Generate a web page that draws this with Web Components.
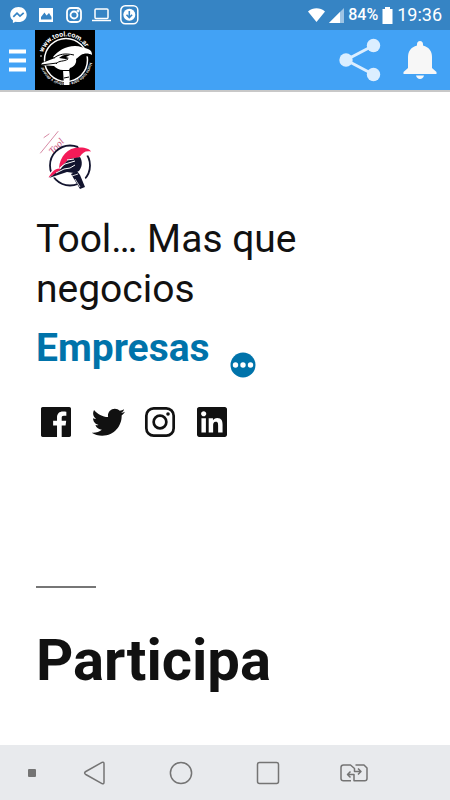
<!DOCTYPE html>
<html lang="es">
<head>
<meta charset="utf-8">
<meta name="viewport" content="width=device-width, initial-scale=1">
<title>Tool</title>
<style>
  body {
    margin: 0;
    background: #fff;
    color: #111;
    font-family: Roboto, "Liberation Sans", sans-serif;
  }
</style>
</head>
<body>
<tool-app></tool-app>

<script>
class StatusBar extends HTMLElement {
  constructor() {
    super();
    this.attachShadow({ mode: "open" });
  }

  static get styles() {
    return /* css */`
      :host {
        display: flex;
        justify-content: space-between;
        align-items: center;
        height: 30px;
        padding: 0 8px;
        background: #3684c4;
        color: #fff;
        font-size: 18px;
        line-height: 30px;
      }

      .notifications {
        display: flex;
        align-items: center;
        gap: 8px;
      }

      .system {
        display: flex;
        align-items: center;
        gap: 4px;
      }

      .battery {
        font-size: 16px;
        font-weight: 500;
      }

      svg { display: block; }
    `;
  }

  connectedCallback() {
    this.shadowRoot.innerHTML = /* html */`
    <style>${StatusBar.styles}</style>
    <div class="notifications">
      <svg width="20" height="20" viewBox="0 0 20 20">
        <path fill="#fff" d="M10.500 2C5.800 2 2.200 5.400 2.200 9.700c0 2.300 1 4.200 2.700 5.600v2.800l2.700-1.400c.9.300 1.900.4 2.900.4 4.700 0 8.200-3.200 8.200-7.400S15.200 2 10.500 2z"/>
        <path fill="none" stroke="#3684c4" stroke-width="1.700" d="M5.300 11.800L9 8.100l3 3 3.700-3.300"/>
      </svg>
      <svg width="20" height="20" viewBox="0 0 20 20">
        <path fill="#fff" fill-rule="evenodd" d="M3 3h14v14H3zM5 14.500h10.500v-2.500l-2.500-4-2.500 2.500-2-3L5 12z"/>
      </svg>
      <svg width="20" height="20" viewBox="0 0 20 20" fill="none" stroke="#fff" stroke-width="1.800">
        <rect x="3" y="3" width="14" height="14" rx="4"/>
        <circle cx="10" cy="10" r="3.500"/>
        <circle cx="14" cy="6" r=".5"/>
      </svg>
      <svg width="20" height="20" viewBox="0 0 20 20" fill="none" stroke="#fff" stroke-width="1.500">
        <rect x="3" y="4" width="13" height="9.500" rx="1"/>
        <path d="M0 15.500h19"/>
      </svg>
      <svg width="20" height="20" viewBox="0 0 20 20">
        <rect x=".8" y=".8" width="17" height="18" rx="4.500" fill="none" stroke="#fff" stroke-width="1.500"/>
        <circle cx="9.300" cy="9.800" r="6" fill="#fff"/>
        <path fill="none" stroke="#3684c4" stroke-width="1.600" d="M9.300 6v6.500M6.500 9.800l2.800 2.900 2.800-2.900"/>
      </svg>
    </div>
    <div class="system">
      <svg width="17" height="14" viewBox="0 0 17 14">
        <path fill="#fff" d="M0 3.500C5-.8 12-.8 17 3.500L8.500 14z"/>
      </svg>
      <svg width="15" height="15" viewBox="0 0 15 15">
        <path fill="#9dc4e4" d="M15 0v15H0z"/>
        <path fill="#fff" d="M11 4v11H0z"/>
      </svg>
      <span class="battery">84%</span>
      <svg width="11" height="17" viewBox="0 0 11 17">
        <path fill="#fff" d="M3 0h5v2h2.500v15H.5V2H3z"/>
      </svg>
      <span>19:36</span>
    </div>`;
  }
}

class AppHeader extends HTMLElement {
  constructor() {
    super();
    this.attachShadow({ mode: "open" });
  }

  static get styles() {
    return /* css */`
      :host {
        display: flex;
        align-items: center;
        height: 60px;
        background: #42a2f5;
        border-bottom: 2px solid #c8c8c8;
      }

      button {
        display: flex;
        justify-content: center;
        align-items: center;
        border: 0;
        padding: 0;
        background: none;
        height: 60px;
      }

      .menu { width: 35px; }
      .share { width: 60px; margin-left: auto; }
      .alerts { width: 60px; }
    `;
  }

  connectedCallback() {
    this.shadowRoot.innerHTML = /* html */`
    <style>${AppHeader.styles}</style>
    <button class="menu" aria-label="Menú">
      <svg width="17" height="23" viewBox="0 0 17 23" fill="#fff">
        <path d="M0 0.500h17v4H0zM0 9.500h17v4H0zM0 18.500h17v4H0z"/>
      </svg>
    </button>
    <slot></slot>
    <button class="share" aria-label="Compartir">
      <svg width="42" height="44" viewBox="0 0 42 44" fill="#dbeeff">
        <path stroke="#dbeeff" stroke-width="3" fill="none" d="M34.500 7.500L7 22l27.500 14.500"/>
        <circle cx="34.500" cy="7.500" r="6.700"/>
        <circle cx="7" cy="22" r="6.700"/>
        <circle cx="34.500" cy="36.500" r="6.700"/>
      </svg>
    </button>
    <button class="alerts" aria-label="Notificaciones">
      <svg width="34" height="38" viewBox="0 0 34 38" fill="#f7f7f7">
        <path d="M17 0c-2 0-3 1.500-3 3.300v1.200C8 6 5 10.500 5 16v11L.5 31v2h33v-2L29 27V16c0-5.500-3-10-9-11.500V3.300C20 1.500 19 0 17 0z"/>
        <path d="M13 34.500h8c-.5 2-2 3.500-4 3.500s-3.500-1.500-4-3.500z"/>
      </svg>
    </button>`;
  }
}

// White on black badge used in the header
class ToolBadge extends HTMLElement {
  constructor() {
    super();
    this.attachShadow({ mode: "open" });
  }

  connectedCallback() {
    this.shadowRoot.innerHTML = /* html */`
    <style>
      :host { display: block; }
      svg { display: block; background: #000; }
      text { font-family: Roboto, "Liberation Sans", sans-serif; fill: #fff; }
      .url { font-size: 7px; font-weight: 700; }
      .motto { font-size: 4px; font-weight: 500; }
    </style>
    <svg width="60" height="60" viewBox="0 0 60 60">
      <defs>
        <path id="top" d="M8.200 22.500A23.500 23.500 0 0 1 53.300 24"/>
        <path id="bottom" d="M54.400 32.500A24 24 0 0 1 7.500 35"/>
      </defs>
      <text class="url"><textPath href="#top">www.tool.com.ar</textPath></text>
      <text class="motto"><textPath href="#bottom">Hazlo todo para construir y decorar</textPath></text>
      <circle cx="6" cy="26" r=".8" fill="#fff"/>
      <circle cx="31" cy="30" r="21.500" fill="none" stroke="#fff" stroke-width="1.500"/>
      <path fill="#000" d="M4 35l8-5 9-6 2 6-8 6zM44 17l9 2 2 8-9-2z"/>
      <path fill="#fff" d="M18 27c5-6 12-11 22-11 5 0 9 2 13 3 3 1 4 3 4 6-3-2-8-2-11 0-2 1-3 3-5 4 1 4-2 8-6 9l-1 2c1 5 1 10 0 15h-5l-1-15c-4 0-7-2-9-4l-13-1 1-2 13-5z"/>
      <path fill="none" stroke="#000" stroke-width="1" d="M6 35l16-2M19 28c5-4 11-5 20-3M21 34c3-4 8-2 12-5"/>
      <path fill="#000" d="M24 28c3-3 7-4 11-3l-4 2 3 1c-3 2-7 0-10 0z"/>
      <path fill="none" stroke="#000" stroke-width="1" d="M28 40.500h9M29 48l5-1"/>
    </svg>`;
  }
}

// Colour logo at the top of the page
class ToolLogo extends HTMLElement {
  constructor() {
    super();
    this.attachShadow({ mode: "open" });
  }

  connectedCallback() {
    this.shadowRoot.innerHTML = /* html */`
    <style>
      :host { display: block; }
      a { display: inline-block; }
      svg { display: block; }
      text {
        font: italic 10px "Liberation Serif", serif;
        fill: #c9507a;
      }
    </style>
    <a href="#" aria-label="Tool">
      <svg width="60" height="60" viewBox="0 0 60 60">
        <text transform="translate(17 25) rotate(-48)">Tool</text>
        <path fill="none" stroke="#d78aa4" stroke-width="1" stroke-linecap="round" d="M4.500 23L22 1.500M8 7.500L13 4"/>
        <circle cx="34" cy="35.500" r="20" fill="none" stroke="#12142e" stroke-width="1.800"/>
        <path fill="#fff" d="M11 46l13-14 16 8-16 6-12 3zM36 42l7-3 10 15-10 4zM42 16l10 0 4 8-9 3z"/>
        <path fill="#f31b58" d="M23 38C24 26 32 17 44 17.500c6 0 10 2 11 4-6-1-8 1-11 5-4 3-8 1-12 4-3 2-5 5-9 7.500z"/>
        <path fill="#f31b58" d="M12.500 47.500c3-5 6-9 11-9l3 1-6 4z"/>
        <path fill="#12142e" d="M28 34l5-5 6-1 5-1c3 5 2 10-1 14l-5 2-7-1-18 6 11-8z"/>
        <path fill="none" stroke="#fff" stroke-width="1" d="M20 43l8-4 6-1 5-3M25 37l4-3 10-3M31 30l7-1"/>
        <path fill="#12142e" d="M35 44l6-3 3 4 5 12-5 2z"/>
        <path fill="none" stroke="#fff" stroke-width=".8" d="M36 46l6-2M39 49l5 8"/>
      </svg>
    </a>`;
  }
}

class SocialLinks extends HTMLElement {
  constructor() {
    super();
    this.attachShadow({ mode: "open" });
  }

  static get styles() {
    return /* css */`
      :host {
        display: flex;
        gap: 12px;
      }

      a {
        display: block;
        color: #111;
      }

      svg {
        display: block;
        width: 40px;
        height: 40px;
        fill: currentColor;
      }
    `;
  }

  connectedCallback() {
    this.shadowRoot.innerHTML = /* html */`
    <style>${SocialLinks.styles}</style>
    <a href="#" aria-label="Facebook">
      <svg viewBox="0 0 24 24"><path d="M20.007 3H3.993C3.445 3 3 3.445 3 3.993v16.013c0 .55.445.994.993.994h8.621v-6.971h-2.346v-2.717h2.346V9.310c0-2.325 1.420-3.591 3.494-3.591.993 0 1.847.074 2.096.107v2.430h-1.438c-1.128 0-1.346.537-1.346 1.324v1.734h2.690l-.35 2.717h-2.340V21h4.587c.548 0 .993-.445.993-.993V3.993C21 3.445 20.555 3 20.007 3z"/></svg>
    </a>
    <a href="#" aria-label="Twitter">
      <svg viewBox="0 0 24 24"><path d="M22.230 5.924c-.736.326-1.527.547-2.357.646.847-.508 1.498-1.312 1.804-2.270-.793.470-1.671.812-2.606.996C18.324 4.498 17.257 4 16.077 4c-2.266 0-4.103 1.837-4.103 4.103 0 .322.036.635.106.935-3.410-.171-6.433-1.804-8.457-4.287-.353.606-.556 1.311-.556 2.063 0 1.424.724 2.679 1.825 3.415-.673-.021-1.305-.206-1.859-.513v.052c0 1.988 1.414 3.647 3.292 4.023-.344.095-.707.145-1.081.145-.265 0-.522-.026-.772-.074.522 1.630 2.038 2.817 3.833 2.850-1.404 1.100-3.174 1.757-5.096 1.757-.332 0-.659-.020-.979-.057 1.816 1.164 3.973 1.843 6.290 1.843 7.547 0 11.675-6.252 11.675-11.675 0-.178-.004-.355-.012-.531.802-.578 1.497-1.300 2.047-2.125z"/></svg>
    </a>
    <a href="#" aria-label="Instagram">
      <svg viewBox="0 0 24 24">
        <rect x="3.800" y="3.800" width="16.400" height="16.400" rx="4.400" fill="none" stroke="currentColor" stroke-width="1.620"/>
        <circle cx="12" cy="12" r="3.810" fill="none" stroke="currentColor" stroke-width="1.620"/>
        <circle cx="16.800" cy="7.200" r="1.080"/>
      </svg>
    </a>
    <a href="#" aria-label="LinkedIn">
      <svg viewBox="0 0 24 24"><path d="M19.700 3H4.300C3.582 3 3 3.582 3 4.300v15.400c0 .718.582 1.300 1.300 1.300h15.400c.718 0 1.300-.582 1.300-1.300V4.300c0-.718-.582-1.300-1.300-1.300zM8.339 18.338H5.667v-8.590h2.672v8.590zM7.004 8.574c-.857 0-1.549-.694-1.549-1.548 0-.855.691-1.548 1.549-1.548.854 0 1.547.694 1.547 1.548 0 .855-.692 1.548-1.547 1.548zm11.335 9.764h-2.669v-4.177c0-.996-.017-2.278-1.387-2.278-1.389 0-1.601 1.086-1.601 2.206v4.249h-2.667v-8.590h2.559v1.174h.037c.356-.675 1.227-1.387 2.526-1.387 2.703 0 3.203 1.779 3.203 4.092v4.711z"/></svg>
    </a>`;
  }
}

class SystemNav extends HTMLElement {
  constructor() {
    super();
    this.attachShadow({ mode: "open" });
  }

  static get styles() {
    return /* css */`
      :host {
        display: flex;
        align-items: center;
        height: 55px;
        padding-left: 28px;
        padding-right: 53px;
        background: #e8eaed;
      }

      .dot {
        width: 8px;
        height: 8px;
        margin-right: 16px;
        border-radius: 1px;
        background: #747474;
      }

      button {
        flex: 1;
        display: flex;
        justify-content: center;
        border: 0;
        padding: 0;
        background: none;
      }

      svg {
        display: block;
        fill: none;
        stroke: #747474;
        stroke-width: 1.5;
        stroke-linejoin: round;
      }
    `;
  }

  connectedCallback() {
    this.shadowRoot.innerHTML = /* html */`
    <style>${SystemNav.styles}</style>
    <span class="dot"></span>
    <button aria-label="Atrás">
      <svg width="24" height="24" viewBox="0 0 24 24"><path d="M19 1.400L2.800 10.500q-2.400 1.500 0 3L19 22.600q2 .8 2-1.400V2.800q0-2.200-2-1.400z"/></svg>
    </button>
    <button aria-label="Inicio">
      <svg width="24" height="24" viewBox="0 0 24 24"><circle cx="12" cy="12" r="10.600"/></svg>
    </button>
    <button aria-label="Recientes">
      <svg width="24" height="24" viewBox="0 0 24 24"><rect x="1.500" y="1.500" width="21" height="21" rx="2"/></svg>
    </button>
    <button aria-label="Cambiar">
      <svg width="28" height="20" viewBox="0 0 28 20">
        <path d="M11 17.800H3.500Q1 17.800 1 15.500V4.500Q1 2 3.500 2H10.500L14.500 5.500V8.500H21M18 5.500l3 3-3 3"/>
        <path d="M15.500 2H24L27 5V15.500q0 2.300-2.300 2.300H14V11.500H7.500M10.500 8.500l-3 3 3 3"/>
      </svg>
    </button>`;
  }
}

class ToolApp extends HTMLElement {
  constructor() {
    super();
    this.attachShadow({ mode: "open" });
  }

  static get styles() {
    return /* css */`
      :host {
        display: flex;
        flex-direction: column;
        min-height: 100vh;
      }

      main {
        flex: 1;
        padding: 38px 36px;
      }

      h1, h2, p { margin: 0; }

      h1 {
        margin-top: 20px;
        font-size: 39px;
        font-weight: 400;
        line-height: 50px;
      }

      .links {
        display: flex;
        align-items: flex-end;
        gap: 20px;
        margin-top: 8px;
      }

      .links a {
        margin-bottom: 4px;
        color: #0073aa;
        font-size: 39px;
        font-weight: 700;
        line-height: 52px;
        text-decoration: none;
      }

      .more {
        border: 0;
        padding: 0;
        background: none;
      }

      .more svg { display: block; }

      social-links { margin-top: 24px; }

      h2 {
        margin-top: 144px;
        font-size: 58px;
        font-weight: 700;
        line-height: 72px;
      }

      h2::before {
        content: "";
        display: block;
        width: 60px;
        height: 2px;
        margin-bottom: 36px;
        background: #767676;
      }
    `;
  }

  connectedCallback() {
    this.shadowRoot.innerHTML = /* html */`
    <style>${ToolApp.styles}</style>
    <status-bar></status-bar>
    <app-header><tool-badge></tool-badge></app-header>
    <main>
      <tool-logo></tool-logo>
      <h1>Tool… Mas que negocios</h1>
      <div class="links">
        <a href="#">Empresas</a>
        <button class="more" aria-label="Más">
          <svg width="26" height="26" viewBox="0 0 26 26">
            <circle cx="13" cy="13" r="12.500" fill="#0073aa"/>
            <g fill="#fff"><circle cx="5.500" cy="13" r="2.700"/><circle cx="13" cy="13" r="2.700"/><circle cx="20.500" cy="13" r="2.700"/></g>
          </svg>
        </button>
      </div>
      <social-links></social-links>
      <h2>Participa</h2>
    </main>
    <system-nav></system-nav>`;
  }
}

customElements.define("status-bar", StatusBar);
customElements.define("app-header", AppHeader);
customElements.define("tool-badge", ToolBadge);
customElements.define("tool-logo", ToolLogo);
customElements.define("social-links", SocialLinks);
customElements.define("system-nav", SystemNav);
customElements.define("tool-app", ToolApp);
</script>
</body>
</html>
